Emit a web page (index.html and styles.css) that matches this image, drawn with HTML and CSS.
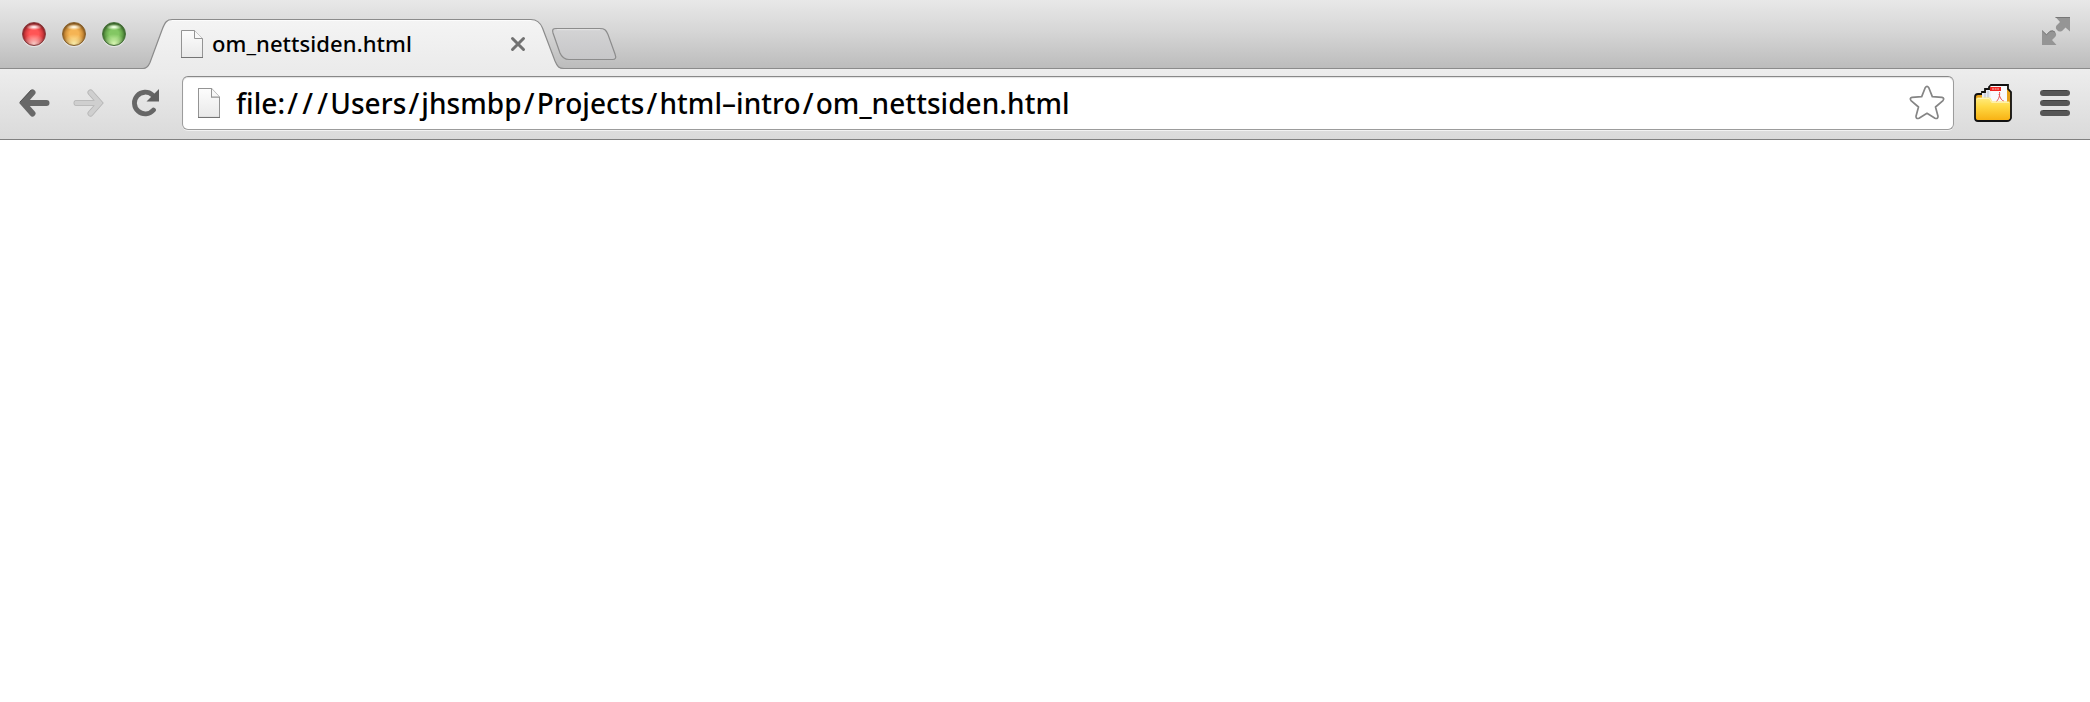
FILE: index.html
```html
<!DOCTYPE html>
<html lang="no">
<head>
<meta charset="utf-8">
<title>om_nettsiden.html</title>
<link rel="stylesheet" href="styles.css">
</head>
<body>
<svg class="defs" width="0" height="0">
  <defs>
    <linearGradient id="paper" x1="0" y1="0" x2="0" y2="1"><stop offset="0" stop-color="#fdfdfd"/><stop offset="1" stop-color="#e9e9e9"/></linearGradient>
    <symbol id="doc" viewBox="0 0 22 28" preserveAspectRatio="none">
      <path d="M.5.5H13.5L21.5 8.5V27.5H.5Z" fill="url(#paper)" stroke="#949494"/>
      <path d="M13.5.5V8.5H21.5" fill="#f8f8f8" stroke="#949494"/>
      <path d="M0 27.5H22" stroke="#747474"/>
    </symbol>
  </defs>
</svg>
<header class="titlebar">
  <div class="lights">
    <span class="light red"></span><span class="light amber"></span><span class="light green"></span>
  </div>
  <div class="tab">
    <svg class="tab-shape" width="424" height="52" viewBox="140 18 424 52">
      <defs><linearGradient id="tabfill" x1="0" y1="0" x2="0" y2="1"><stop offset="0" stop-color="#f4f4f4"/><stop offset="1" stop-color="#ebebeb"/></linearGradient></defs>
      <path d="M140 70V68.5H143C147 68.5 148.500 66 150 62.500L162 30C165 22 167 19.500 172 19.500H531C537 19.500 540 22 542.500 28L555 61C557.500 67 559 68.500 564 68.500V70Z" fill="url(#tabfill)"/>
      <path d="M140 68.500H143C147 68.500 148.500 66 150 62.500L162 30C165 22 167 19.500 172 19.500H531C537 19.500 540 22 542.500 28L555 61C557.500 67 559 68.500 564 68.500" fill="none" stroke="#8b8b8b" stroke-width="1.200"/>
      <path d="M172 20.600H531" stroke="#fff" stroke-opacity=".8"/>
    </svg>
    <svg class="doc" width="22" height="28"><use href="#doc"/></svg>
    <span class="tab-title">om_nettsiden.html</span>
    <svg class="close" width="16" height="16" viewBox="0 0 16 16"><path d="M2.500 2.500l11 11M13.500 2.500l-11 11" stroke="#717171" stroke-width="3" stroke-linecap="round"/></svg>
  </div>
  <svg class="newtab" width="66" height="34" viewBox="551 27 66 34">
    <defs><linearGradient id="nt" x1="0" y1="0" x2="0" y2="1"><stop offset="0" stop-color="#d4d4d5"/><stop offset="1" stop-color="#c6c6c8"/></linearGradient></defs>
    <path d="M556 28.500H600C604.500 28.500 606 30 608 34.500L615 54C616.500 58 615.500 59.500 612.500 59.500H569C563.500 59.500 561.500 56.500 560 53L553 33C552 29.500 553 28.500 556 28.500Z" fill="url(#nt)" stroke="#8c8c8c" stroke-width="1.200"/>
    <path d="M557 29.700H600" stroke="#fff" stroke-opacity=".4"/>
  </svg>
  <svg class="fullscreen" width="28" height="28" viewBox="0 0 28 28">
    <path d="M13.500 0H28V14.500L23.500 10.500L20 14Q17 15.500 15 13Q13 11 14.500 8.500L18 5Z" fill="#959595"/>
    <path d="M14.500 28H0V13.500L4.500 17.500L8 14Q11 12.500 13 15Q15 17 13.500 19.500L10 23Z" fill="#959595"/>
    <path d="M13.500.5H28M0 13.500L4.500 17.800L8 14.300Q11 13 13 15.200" fill="none" stroke="#777"/>
  </svg>
</header>
<nav class="toolbar">
  <svg class="back" width="32" height="28" viewBox="0 0 32 28">
    <path d="M14.500 3.500 5.200 14l9.300 10.500M6 14h22.500" fill="none" stroke="#686868" stroke-width="6" stroke-linecap="round"/>
    <path d="M13 1.300L2 13" fill="none" stroke="#4e4e4e" stroke-linecap="round"/>
  </svg>
  <svg class="forward" width="32" height="28" viewBox="0 0 32 28">
    <path d="M17.500 3.500 26.800 14l-9.300 10.500M26 14H3.500" fill="none" stroke="#b5b5b5" stroke-width="6" stroke-linecap="round"/>
    <path d="M17.500 3.500 26.800 14l-9.300 10.500M26 14H3.500" fill="none" stroke="#cfcfcf" stroke-width="4.400" stroke-linecap="round"/>
  </svg>
  <svg class="reload" width="28" height="28" viewBox="0 0 28 28">
    <path d="M21.500 21A10.800 10.800 0 1 1 20.500 6" fill="none" stroke="#666" stroke-width="4.800" stroke-linecap="round"/>
    <path d="M27 0V12.500H14.500Z" fill="#606060"/>
  </svg>
  <div class="omnibox">
    <svg class="doc" width="22" height="30"><use href="#doc"/></svg>
    <span class="url">file:<i>/</i><i>/</i><i>/</i>Users<i>/</i>jhsmbp<i>/</i>Projects<i>/</i>html–intro<i>/</i>om_nettsiden.html</span>
    <svg class="star" width="36" height="36" viewBox="0 0 36 36">
      <path d="M16.200 2.700Q18 .2 19.800 2.700L23.300 11.600L33 12.400Q36 13.300 33.700 15.900L26.500 22L29 31.200Q29 34.300 26 33.200L18 28.300L10 33.200Q7 34.300 7 31.200L9.500 22L2.300 15.900Q0 13.300 3 12.400L12.700 11.600Z" fill="#fff" stroke="#858585" stroke-width="1.700" stroke-linejoin="round"/>
    </svg>
  </div>
  <svg class="folder" width="38" height="38" viewBox="0 0 38 38">
    <defs>
      <linearGradient id="gold" x1="0" y1="0" x2="0" y2="1"><stop offset="0" stop-color="#ffec80"/><stop offset=".4" stop-color="#ffd944"/><stop offset="1" stop-color="#f8b214"/></linearGradient>
    </defs>
    <path d="M1 34V13Q1 10 4 10H8V8H11V5H15V3L17 1H34V5L37 8V34Q36 37 33 37H4Q1 37 1 34Z" fill="#e6a018" stroke="#111" stroke-width="1.800"/>
    <path d="M8 9H12V6H17V18H8Z" fill="#e8ebf3"/>
    <path d="M11 9V14M14 7V14" stroke="#b7bdc9"/>
    <path d="M16.500 2H33V18H16.500Z" fill="#f9f9fc"/>
    <path d="M16 3H27V7H16Z" fill="#ef2520"/>
    <path d="M18 5H25" stroke="#fff" stroke-opacity=".7" stroke-dasharray="2 .6"/>
    <path d="M25.500 8C26.500 13 23 17 22 18M25 10C26 14 28 17 30 17" fill="none" stroke="#e74c4c"/>
    <path d="M2 15.500Q2 13.500 4 13.500H15Q17 13.500 18 17.500H35Q36 17.500 36 19V33Q36 36 33 36H5Q2 36 2 33Z" fill="url(#gold)"/>
    <path d="M3 15.500Q3 14.500 5 14.500H15Q16 14.500 17.500 18.300H35" fill="none" stroke="#fff5b6"/>
  </svg>
  <svg class="menu" width="30" height="26" viewBox="0 0 30 26">
    <g fill="#565656"><rect width="30" height="6" rx="3"/><rect y="10" width="30" height="6" rx="3"/><rect y="20" width="30" height="6" rx="3"/></g>
    <path d="M3 .5H27M3 10.500H27M3 20.500H27" stroke="#404040"/>
  </svg>
</nav>
<main class="page"></main>
</body>
</html>
```
FILE: styles.css
```css
* { box-sizing: border-box; }
html, body { height: 100%; }
body {
  margin: 0;
  display: flex;
  flex-direction: column;
  overflow: hidden;
  background: #fff;
  font-family: "Noto Sans", "Open Sans", sans-serif;
  color: #000;
}
svg { display: block; flex: none; }
.defs { position: absolute; }

.titlebar {
  flex: none;
  display: flex;
  align-items: flex-start;
  height: 69px;
  padding: 0 20px 0 22px;
  background: linear-gradient(#e8e8e8, #d5d5d5 48%, #bcbcbc);
  border-bottom: 1px solid #8b8b8b;
}
.lights { display: flex; gap: 16px; margin-top: 22px; }
.light {
  width: 24px;
  height: 24px;
  border-radius: 50%;
  box-shadow: 0 1px 1px rgba(255, 255, 255, .6), inset 0 1px 3px rgba(0, 0, 0, .5);
}
.red {
  border: 1px solid #863b3d;
  background: radial-gradient(ellipse 8px 3px at 50% 4px, #ffe4e4 20%, transparent), radial-gradient(ellipse 12px 10px at 50% 21px, #ffd0cc, transparent), radial-gradient(circle, #f55 30%, #b92a30 75%);
}
.amber {
  border: 1px solid #86602c;
  background: radial-gradient(ellipse 8px 3px at 50% 4px, #fff5dc 20%, transparent), radial-gradient(ellipse 12px 10px at 50% 21px, #fff3ae, transparent), radial-gradient(circle, #f5b454 30%, #b77728 75%);
}
.green {
  border: 1px solid #46703a;
  background: radial-gradient(ellipse 8px 3px at 50% 4px, #ebffdc 20%, transparent), radial-gradient(ellipse 12px 10px at 50% 21px, #e0ffba, transparent), radial-gradient(circle, #83c763 30%, #4b8636 75%);
}

.tab {
  position: relative;
  flex: none;
  display: flex;
  align-items: center;
  width: 424px;
  height: 52px;
  margin: 18px 0 0 14px;
  padding: 0 38px 0 41px;
}
.tab-shape { position: absolute; top: 0; left: 0; }
.tab .doc, .tab-title, .close { position: relative; }
.tab-title {
  flex: 1;
  margin: 0 0 2px 9px;
  font-size: 22px;
  font-weight: 500;
  letter-spacing: .07px;
  line-height: 30px;
  white-space: nowrap;
}
.newtab { position: relative; margin: 27px 0 0 -13px; }
.fullscreen { margin: 17px 0 0 auto; }

.toolbar {
  flex: none;
  display: flex;
  align-items: center;
  height: 71px;
  padding: 0 20px 2px 18px;
  background: linear-gradient(#ededed, #dadada);
  border-bottom: 1px solid #808080;
}
.forward { margin-left: 23px; }
.reload { margin-left: 27px; }
.omnibox {
  flex: 1;
  display: flex;
  align-items: center;
  height: 54px;
  margin: 0 20px 0 22px;
  padding: 0 8px 0 15px;
  background: #fff;
  border: 1px solid #9c9c9c;
  border-top-color: #888;
  border-radius: 6px;
  box-shadow: 0 1px 0 #f2f2f2, inset 0 1px 1px #e2e2e2;
}
.url {
  flex: 1;
  margin-left: 16px;
  font-size: 28px;
  font-weight: 500;
  letter-spacing: .06px;
  line-height: 38px;
  white-space: nowrap;
}
.url i { margin: 0 2.1px; font-style: normal; }
.folder { margin-bottom: 1px; }
.menu { margin-left: 28px; }
.page { flex: 1; background: #fff; }
```
